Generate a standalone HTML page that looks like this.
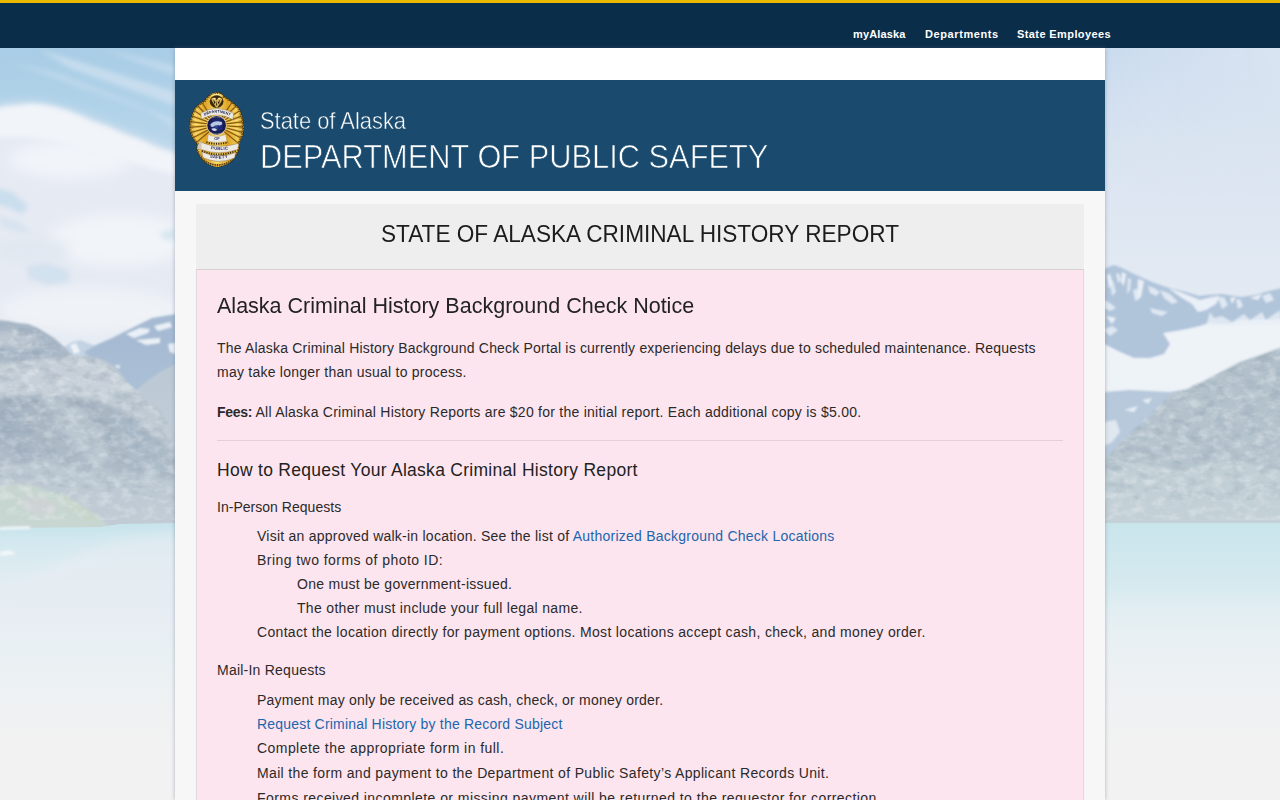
<!DOCTYPE html>
<html lang="en">
<head>
<meta charset="utf-8">
<title>State of Alaska Criminal History Report</title>
<style>
html,body{margin:0;padding:0;width:1280px;height:800px;overflow:hidden;}
body{width:1280px;height:800px;overflow:hidden;position:relative;background:#e9eef2;font-family:"Liberation Sans",sans-serif;color:#222;}
#bg{position:absolute;left:0;top:0;width:1280px;height:800px;}
#topbar{position:absolute;left:0;top:0;width:1280px;height:48px;background:#0a2d4a;border-top:3px solid #ebb800;box-sizing:border-box;}
#topbar a{position:absolute;top:23px;line-height:16px;font-size:11px;font-weight:bold;color:#fff;text-decoration:none;white-space:nowrap;}
#wrap{position:absolute;left:175px;top:48px;width:930px;height:752px;overflow:hidden;background:#f7f7f7;box-shadow:0 0 4px rgba(90,100,120,.45);}
#white{position:absolute;left:0;top:0;width:930px;height:32px;background:#fff;}
#hdr{position:absolute;left:0;top:32px;width:930px;height:111px;background:#1a4b6e;}
#hdr .t1{position:absolute;left:85px;top:25px;font-size:24px;line-height:32px;color:#fff;white-space:nowrap;letter-spacing:0;transform:scaleX(.912);transform-origin:0 0;-webkit-text-stroke:0.5px #1a4b6e;}
#hdr .t2{position:absolute;left:85px;top:57px;font-size:33px;line-height:40px;color:#fff;white-space:nowrap;letter-spacing:0;transform:scaleX(.9335);transform-origin:0 0;-webkit-text-stroke:0.7px #1a4b6e;}
#badge{position:absolute;left:11px;top:8px;width:64px;height:84px;}
#panel{position:absolute;left:21px;top:156px;width:886px;height:700px;border:1px solid transparent;}
#pbody{position:absolute;left:-1px;top:65px;width:886px;height:640px;background:#fde5ef;border-left:1px solid #e3d6dc;border-right:1px solid #e3d6dc;}
#phead{position:absolute;left:-1px;top:-1px;width:888px;height:65px;background:#eee;border-bottom:1px solid #d6d2d4;}
#phead div{position:absolute;left:0;width:888px;top:14px;text-align:center;font-size:24px;line-height:32px;color:#1c1c1c;letter-spacing:0;white-space:nowrap;transform:scaleX(.942);transform-origin:50% 0;}
.l{position:absolute;white-space:nowrap;font-size:14px;line-height:24px;color:#2a2a2a;letter-spacing:0.2px;}
.l b{letter-spacing:-.3px;}
.l a{color:#2066ad;text-decoration:none;}
.h2{font-size:22px;line-height:30px;letter-spacing:0;color:#222;transform:scaleX(.978);transform-origin:0 0;}
.h3{font-size:17.5px;line-height:26px;letter-spacing:0.25px;color:#222;}
#hr{position:absolute;left:20px;top:235px;width:846px;height:1px;background:#e3cfd8;}
</style>
</head>
<body>
<svg id="bg" viewBox="0 0 1280 800" width="1280" height="800">
<defs>
  <linearGradient id="skyL" x1="0" y1="48" x2="0" y2="330" gradientUnits="userSpaceOnUse">
    <stop offset="0" stop-color="#a9cde6"/><stop offset=".25" stop-color="#b2d3e9"/><stop offset=".6" stop-color="#cfe0ee"/><stop offset="1" stop-color="#eaeff5"/>
  </linearGradient>
  <linearGradient id="skyR" x1="0" y1="48" x2="0" y2="300" gradientUnits="userSpaceOnUse">
    <stop offset="0" stop-color="#cadcef"/><stop offset=".4" stop-color="#dae4f1"/><stop offset="1" stop-color="#e3eaf3"/>
  </linearGradient>
  <linearGradient id="skyRx" x1="1104" y1="0" x2="1280" y2="0" gradientUnits="userSpaceOnUse">
    <stop offset="0" stop-color="#e0e7f2" stop-opacity="0"/><stop offset="1" stop-color="#e0e7f2" stop-opacity=".7"/>
  </linearGradient>
  <linearGradient id="skyRy" x1="0" y1="48" x2="0" y2="200" gradientUnits="userSpaceOnUse">
    <stop offset="0" stop-color="#fff" stop-opacity="1"/><stop offset="1" stop-color="#fff" stop-opacity="0"/>
  </linearGradient>
  <mask id="mR"><rect x="1104" y="48" width="176" height="200" fill="url(#skyRy)"/></mask>
  <linearGradient id="water" x1="0" y1="522" x2="0" y2="742" gradientUnits="userSpaceOnUse"><stop offset="0.000" stop-color="#c6e3eb"/><stop offset="0.036" stop-color="#cbe5ed"/><stop offset="0.091" stop-color="#d3e8ef"/><stop offset="0.173" stop-color="#daebf0"/><stop offset="0.264" stop-color="#e1ecf1"/><stop offset="0.445" stop-color="#e6eff3"/><stop offset="0.718" stop-color="#ecf1f3"/><stop offset="1.000" stop-color="#f2f2f2"/></linearGradient>
  <linearGradient id="waterR" x1="0" y1="522" x2="0" y2="742" gradientUnits="userSpaceOnUse"><stop offset="0.000" stop-color="#c9e5ec"/><stop offset="0.127" stop-color="#cee7ed"/><stop offset="0.286" stop-color="#d6eaef"/><stop offset="0.400" stop-color="#e2eef2"/><stop offset="0.536" stop-color="#e9f0f3"/><stop offset="0.764" stop-color="#eef1f3"/><stop offset="1.000" stop-color="#f2f2f2"/></linearGradient>
  <linearGradient id="haze" x1="0" y1="340" x2="0" y2="526" gradientUnits="userSpaceOnUse">
    <stop offset="0" stop-color="#e6edf2" stop-opacity="0"/><stop offset="1" stop-color="#e6edf2" stop-opacity=".3"/>
  </linearGradient>
  <filter id="b1" x="-20%" y="-20%" width="140%" height="140%"><feGaussianBlur stdDeviation=".8"/></filter>
  <filter id="b2" x="-20%" y="-20%" width="140%" height="140%"><feGaussianBlur stdDeviation="2.5"/></filter>
  <filter id="b5" x="-30%" y="-30%" width="160%" height="160%"><feGaussianBlur stdDeviation="6"/></filter>
  <filter id="rock" x="0" y="0" width="100%" height="100%" color-interpolation-filters="sRGB">
    <feTurbulence type="fractalNoise" baseFrequency="0.09 0.13" numOctaves="3" seed="7" result="n"/>
    <feColorMatrix in="n" type="matrix" values="0 0 0 0 1  0 0 0 0 1  0 0 0 0 1  2.6 0 0 0 -1.15" result="hi"/>
    <feComposite in="hi" in2="SourceAlpha" operator="in"/>
  </filter>
  <filter id="rockd" x="0" y="0" width="100%" height="100%" color-interpolation-filters="sRGB">
    <feTurbulence type="fractalNoise" baseFrequency="0.07 0.11" numOctaves="3" seed="23" result="n"/>
    <feColorMatrix in="n" type="matrix" values="0 0 0 0 .38  0 0 0 0 .47  0 0 0 0 .56  0 2.4 0 0 -1.1" result="lo"/>
    <feComposite in="lo" in2="SourceAlpha" operator="in"/>
  </filter>
  <clipPath id="cl"><rect x="0" y="48" width="176" height="752"/></clipPath>
  <clipPath id="cr"><rect x="1104" y="48" width="176" height="752"/></clipPath>
</defs>
<!-- LEFT BAND -->
<g clip-path="url(#cl)">
  <rect x="0" y="48" width="176" height="500" fill="url(#skyL)"/>
  <g filter="url(#b2)" fill="#d3e3f1">
    <path d="M40 50 L176 92 L176 106 L70 68Z" opacity=".7"/>
    <path d="M10 62 L150 112 L176 130 L176 120 L60 74Z" opacity=".45"/>
    <path d="M100 48 L176 66 L176 76Z" opacity=".5"/>
  </g>
  <g filter="url(#b5)">
    <path d="M-20 112 C5 103 30 102 55 108 C80 114 100 124 126 134 C146 142 160 148 190 160 L190 345 L-20 345Z" fill="#e6eaf3"/>
    <ellipse cx="70" cy="160" rx="60" ry="18" fill="#f1f4f9"/>
    <ellipse cx="120" cy="240" rx="70" ry="26" fill="#f1f4f8"/>
    <ellipse cx="90" cy="310" rx="90" ry="22" fill="#eff3f7"/>
    <ellipse cx="30" cy="250" rx="40" ry="12" fill="#e1e8f1"/>
  </g>
  <path d="M-10 112 C0 106 14 107 24 105 C36 102 48 106 58 108 C70 111 78 115 90 121 C100 125 108 126 118 132 C128 137 138 138 148 144 C158 149 166 150 180 156 L180 176 C150 168 120 160 90 150 C60 142 30 134 -10 138Z" fill="#f1f4f9" filter="url(#b2)"/>
  <g filter="url(#b2)" fill="#c0d9eb">
    <path d="M-5 188 L12 192 L28 206 L22 214 L8 207 L-5 204Z" opacity=".75"/>
    <path d="M0 216 L18 222 L32 232 L18 232 L0 226Z" opacity=".4"/>
    <path d="M26 267 L46 263 L68 270 L70 282 L48 285 L30 279Z" opacity=".5"/>
    <path d="M160 232 L176 228 L176 240 L164 240Z" opacity=".5"/>
  </g>
  <!-- far peaks in valley -->
  <path d="M62 348 L72 342 L80 340 L88 343 L96 346 L104 356 L64 362Z" fill="#c3d3e4" filter="url(#b1)"/>
  <path d="M70 345 L76 343 L80 352 L74 354Z" fill="#eef3f8" filter="url(#b1)"/>
  <!-- right blue mountain -->
  <g filter="url(#b1)">
    <path d="M84 352 L98 344 L112 338 L128 330 L140 324 L152 318 L164 316 L176 314 L176 470 L130 420 L104 372Z" fill="#a6bbd3"/>
    <path d="M126 334 L140 328 L150 329 L148 333 L134 338Z M154 326 L170 322 L172 327 L158 331Z M136 340 L160 338 L160 343 L146 345Z M168 344 L176 343 L176 354 L170 352Z M114 366 L120 365 L119 369Z" fill="#eaf0f6"/>
    <path d="M176 364 L160 372 L146 382 L136 390 L150 412 L176 440Z" fill="#bac7d3"/>
  </g>
  <!-- left rocky mountain: back ridge -->
  <g filter="url(#b1)">
    <path d="M-2 320 L8 321 L18 323 L28 324 L38 328 L46 333 L54 338 L60 343 L66 349 L72 355 L78 362 L60 372 L-2 372Z" fill="#a7b6c5"/>
    <path id="lfm" d="M-2 366 L14 362 L34 360 L52 358 L68 356 L84 356 L98 358 L108 362 L118 370 L126 380 L134 390 L146 398 L158 407 L168 420 L176 436 L176 530 L-2 530Z" fill="#bac5cf"/>
  </g>
  <clipPath id="clm"><path d="M-2 320 L28 324 L46 333 L60 343 L72 355 L84 356 L98 358 L108 362 L118 370 L126 380 L134 390 L146 398 L158 407 L168 420 L176 436 L176 530 L-2 530Z"/></clipPath>
  <g clip-path="url(#clm)"><g filter="url(#b2)">
    <path d="M-10 334 L16 330 L34 336 L44 346 L30 350 L8 346 L-10 350Z" fill="#c3ccd5" opacity=".75"/>
    <path d="M-10 366 L30 361 L70 358 L100 360 L124 380 L136 394 L100 400 L60 392 L20 394 L-10 398Z" fill="#c7d0d8" opacity=".85"/>
    <path d="M-10 398 L20 394 L44 400 L70 396 L96 402 L120 410 L140 424 L160 440 L186 460 L186 540 L-10 540Z" fill="#a0afbd"/>
    <path d="M40 404 L60 400 L84 410 L100 430 L110 456 L96 470 L80 450 L60 430Z" fill="#bac6cf" opacity=".75"/>
    <path d="M-10 404 L16 410 L30 430 L44 456 L30 470 L10 450 L-10 440Z" fill="#98aaba" opacity=".7"/>
    <path d="M112 420 L130 416 L150 440 L166 470 L150 480 L128 456Z" fill="#9fb0bf" opacity=".6"/>
    <path d="M-10 468 L40 460 L80 468 L120 474 L186 478 L186 540 L-10 540Z" fill="#b3c0ca" opacity=".9"/>
  </g>
  <g filter="url(#b1)">
    <path d="M-2 487 L14 484 L34 486 L52 492 L70 500 L86 508 L100 518 L110 527 L-2 530Z" fill="#bccdc4"/>
    <path d="M20 498 L40 496 L60 506 L50 516 L28 512Z" fill="#c9c7cc" opacity=".7"/>
    <path d="M60 492 L84 506 L100 520 L84 520 L66 508Z" fill="#b9cbb8" opacity=".7"/>
  </g></g>
  <!-- texture -->
  <path d="M-2 324 L38 330 L66 351 L98 358 L126 380 L158 407 L176 436 L176 520 L-2 520Z" fill="#fff" filter="url(#rock)" opacity=".3"/>
  <path d="M-2 324 L38 330 L66 351 L98 358 L126 380 L158 407 L176 436 L176 500 L-2 480Z" fill="#fff" filter="url(#rockd)" opacity=".25"/>
  <rect x="0" y="340" width="176" height="190" fill="url(#haze)"/>
</g>
<!-- RIGHT BAND -->
<g clip-path="url(#cr)">
  <rect x="1104" y="48" width="176" height="500" fill="url(#skyR)"/>
  <rect x="1104" y="48" width="176" height="200" fill="url(#skyRx)" mask="url(#mR)"/>
  <g filter="url(#b1)">
    <path d="M1100 271 L1106 268 L1114 265 L1122 268 L1132 273 L1145 279 L1152 282 L1166 287 L1186 292 L1199 296 L1207 295 L1222 294 L1241 297 L1255 295 L1269 291 L1282 288 L1282 530 L1100 530Z" fill="#b0c4da"/>
    <!-- ridge snow streaks -->
    <path d="M1107 275 L1110 274 L1113 284 L1109 288Z M1122 272 L1126 274 L1124 286 L1121 282Z M1138 279 L1144 281 L1141 297 L1137 300Z M1168 288 L1180 292 L1190 296 L1200 300 L1212 297 L1220 296 L1216 304 L1206 310 L1198 312 L1192 304 L1182 298Z M1230 298 L1236 297 L1232 304Z M1250 298 L1262 294 L1258 300Z M1106 316 L1116 318 L1112 324Z" fill="#eaf0f7"/>
    <path d="M1110 282 L1113 281 L1116 292 L1112 296Z M1116 274 L1119 273 L1121 280 L1118 283Z M1128 278 L1131 279 L1130 290 L1127 294Z M1133 290 L1137 289 L1140 298 L1135 301Z M1148 286 L1154 288 L1160 292 L1156 296 L1150 293Z M1160 290 L1170 294 L1178 302 L1172 304 L1164 298Z M1104 300 L1110 303 L1116 308 L1110 311 L1104 308Z M1150 308 L1158 310 L1168 312 L1162 316 L1152 313Z M1218 298 L1224 297 L1228 305 L1222 309Z M1236 300 L1240 299 L1243 306 L1238 309Z M1262 296 L1270 293 L1274 300 L1266 303Z M1104 330 L1112 326 L1118 330 L1110 336Z" fill="#e4ecf5" opacity=".9"/>
    <!-- snowfield -->
    <path d="M1104 344 L1112 348 L1120 352 L1134 358 L1150 358 L1164 354 L1170 344 L1163 333 L1176 331 L1187 329 L1200 326 L1209 323 L1228 324 L1241 320 L1260 320 L1282 319 L1282 350 L1260 356 L1240 362 L1219 373 L1204 381 L1187 389 L1170 392 L1150 391 L1130 390 L1104 392Z" fill="#eef3f8"/>
    <path d="M1210 312 L1214 318 L1222 316 L1232 322 L1244 314 L1250 320 L1262 312 L1266 320 L1280 310 L1282 324 L1206 326Z" fill="#e9eff6" opacity=".8"/>
    <!-- far blue lower -->
    <path d="M1104 392 L1170 392 L1150 416 L1120 442 L1104 460Z" fill="#b4c6da"/>
    <path d="M1104 422 L1116 420 L1120 432 L1112 442 L1104 446Z" fill="#dfe7ef"/>
    <path d="M1124 410 L1138 406 L1134 412Z M1142 400 L1152 398 L1148 404Z" fill="#e6edf4"/>
    <!-- front grey mountain -->
    <path d="M1282 347 L1260 355 L1240 362 L1219 373 L1204 381 L1187 389 L1170 394 L1158 408 L1142 424 L1120 442 L1104 460 L1104 530 L1282 530Z" fill="#b0bfc9"/>
    <path d="M1104 474 L1140 462 L1180 470 L1230 460 L1282 470 L1282 530 L1104 530Z" fill="#bccad1"/>
  </g>
  <path d="M1282 347 L1219 373 L1170 394 L1120 442 L1104 460 L1104 520 L1282 520Z" fill="#fff" filter="url(#rock)" opacity=".3"/>
  <path d="M1282 347 L1219 373 L1170 394 L1120 442 L1104 460 L1104 500 L1282 500Z" fill="#fff" filter="url(#rockd)" opacity=".22"/>
  <rect x="1104" y="360" width="176" height="170" fill="url(#haze)" opacity=".6"/>
</g>
<!-- WATER -->
<path d="M0 528 L100 527 L120 524 L176 523 L176 800 L0 800Z" fill="url(#water)"/>
<rect x="1104" y="523" width="176" height="277" fill="url(#waterR)"/>
<g clip-path="url(#cl)"><path d="M80 552 L124 538 L200 530 L200 640 L-20 640 L-20 604Z" fill="#e9edf3" opacity=".55" filter="url(#b5)"/></g>
<path d="M0 527 L30 526 L30 529 L0 530Z" fill="#eef4f7" filter="url(#b1)"/>
<path d="M0 552 L10 550 L16 554 L0 556Z" fill="#f2f6f8" filter="url(#b1)"/>
</svg>
<div id="topbar">
  <a style="left:853px;letter-spacing:.14px">myAlaska</a>
  <a style="left:925px;letter-spacing:.59px">Departments</a>
  <a style="left:1017px;letter-spacing:.4px">State Employees</a>
</div>
<div id="wrap">
  <div id="white"></div>
  <div id="hdr">
    <svg id="badge" viewBox="186 88 64 84" width="64" height="84">
<defs>
  <linearGradient id="gd" x1="189" y1="0" x2="244" y2="0" gradientUnits="userSpaceOnUse">
    <stop offset="0" stop-color="#a8721c"/><stop offset=".12" stop-color="#f2cc52"/><stop offset=".3" stop-color="#e0a526"/><stop offset=".5" stop-color="#f6da6c"/><stop offset=".7" stop-color="#e0a526"/><stop offset=".88" stop-color="#f2cc52"/><stop offset="1" stop-color="#a8721c"/>
  </linearGradient>
  <radialGradient id="seal" cx="216.6" cy="125.2" r="9.6" gradientUnits="userSpaceOnUse">
    <stop offset="0" stop-color="#3f5aa0"/><stop offset=".5" stop-color="#1f2a70"/><stop offset="1" stop-color="#12133f"/>
  </radialGradient>
  <clipPath id="bc"><path id="bodyp" d="M216.8 92.5 C219.5 92.5 222.6 93.6 223.8 96.4 C227 97.8 233 102.5 238.8 108.4 C241.4 113 243 120 243.6 127 C243.4 132.5 242.2 137.5 239.6 142 L238.9 149 C237.2 154 235.2 157 233.4 158.8 C231.3 161.2 229.6 162.6 228 163.6 C224.2 165.6 221 166.4 217.6 166.9 C214 166.4 210.5 165.2 207 163.2 C205 161.7 203.1 160.1 201.6 158.3 C199.6 155.6 198 153 197 150 L197.3 143.8 C194.6 140.4 193 138.2 192 136 C190.3 132.3 189.6 129.2 189.6 127 C189.9 122.5 190.5 120 191.4 118 C192.4 114 193.4 111 195 108.4 C198 105 200.8 103 204 101.6 C205.8 98.8 207.8 96.5 209.8 95 C211.8 93.3 214.4 92.5 216.8 92.5Z"/></clipPath>
  <path id="pDept" d="M202 117.4 Q217 107.6 232.6 117.6" fill="none"/>
  <path id="pPub" d="M202.4 146.2 Q218.5 153 237 147.8" fill="none"/>
  <path id="pSaf" d="M203.6 154.8 Q218 162 234.2 155.8" fill="none"/>
  <filter id="bb" x="-10%" y="-10%" width="120%" height="120%"><feGaussianBlur stdDeviation=".35"/></filter>
</defs>
<g filter="url(#bb)">
  <use href="#bodyp" fill="url(#gd)" stroke="#3f2a0a" stroke-width="1.1"/>
  <g clip-path="url(#bc)">
    <!-- rays -->
    <g stroke="#7e520f" stroke-width="1.25" opacity=".9">
      <path d="M216.6 125.2 L186 121 M216.6 125.2 L186 127.5 M216.6 125.2 L186 134 M216.6 125.2 L187 141 M216.6 125.2 L190 148 M216.6 125.2 L188 114.5 M216.6 125.2 L190 108 M216.6 125.2 L194 102 M216.6 125.2 L199 98"/>
      <path d="M216.6 125.2 L248 121 M216.6 125.2 L248 127.5 M216.6 125.2 L248 134 M216.6 125.2 L247 141 M216.6 125.2 L244 148 M216.6 125.2 L246 114.5 M216.6 125.2 L244 108 M216.6 125.2 L240 102 M216.6 125.2 L235 98"/>
    </g>
    <g stroke="#fbe78c" stroke-width=".8" opacity=".85">
      <path d="M216.6 125.2 L186 124.2 M216.6 125.2 L186 130.7 M216.6 125.2 L186.5 137.5 M216.6 125.2 L188 118 M216.6 125.2 L189 111 M216.6 125.2 L192 105"/>
      <path d="M216.6 125.2 L248 124.2 M216.6 125.2 L248 130.7 M216.6 125.2 L247.5 137.5 M216.6 125.2 L246 118 M216.6 125.2 L245 111 M216.6 125.2 L242 105"/>
    </g>
    <!-- outer rim scallops -->
    <use href="#bodyp" fill="none" stroke="#5e3d0c" stroke-width="3" stroke-dasharray="1.3 1.4" opacity=".85"/>
    <use href="#bodyp" fill="none" stroke="#f3d874" stroke-width="1" stroke-dasharray="1.5 1.3" stroke-dashoffset="1.4" opacity=".9"/>
    <!-- bottom rim dark checks -->
    <path d="M200 157 Q217.8 172 235.4 157 L233 165 Q217.8 170 203 165Z" fill="#c08a24"/>
    <path d="M203.4 160.6 Q217.8 169.6 232 160.8" fill="none" stroke="#4a3210" stroke-width="2.2" stroke-dasharray="1.1 1.3"/>
    <path d="M207 164 Q217.8 168.4 228 164.2" fill="none" stroke="#e7c25a" stroke-width="1.4" stroke-dasharray="1.2 1"/>
  </g>
  <!-- top dome + eagle -->
  <path d="M210.4 96 C212 93.2 221.6 93.2 223 96 C221 94.9 212.6 94.9 210.4 96Z" fill="#fbeeb0"/>
  <ellipse cx="216.6" cy="101.6" rx="6.9" ry="6.3" fill="#3b2a0e"/>
  <path d="M211.2 99 C213 96.6 215.4 97.6 216.4 100.4 C217.6 97.4 220.6 96.6 222.2 99.2 C221 103 219 104.6 217.6 107.4 L216 107.4 C214.8 104.6 212.4 102.8 211.2 99Z" fill="#d9b55a"/>
  <path d="M213.4 99.6 L215.6 102.6 L214.2 104Z M219.8 99.6 L217.8 102.8 L219.2 104.2Z M216.7 100.8 L217.3 105.6 L216.1 105.6Z" fill="#2a1c08"/>
  <ellipse cx="214.6" cy="98.6" rx="1.1" ry=".8" fill="#fff3c4"/><ellipse cx="219.2" cy="98.4" rx="1" ry=".7" fill="#fff3c4"/>
  <!-- DEPARTMENT banner -->
  <path d="M200.6 113.2 Q217 103.6 233.8 113.6 L232.8 119.6 Q217 110.8 201.6 119.2Z" fill="#ece8e0" stroke="#7c6a4a" stroke-width=".4"/>
  <text font-family="Liberation Sans, sans-serif" font-weight="bold" font-size="3.7" fill="#20224e" letter-spacing=".12"><textPath href="#pDept" startOffset="50%" text-anchor="middle">DEPARTMENT</textPath></text>
  <!-- seal -->
  <circle cx="216.6" cy="125.4" r="10" fill="#e6dcb4"/>
  <circle cx="216.6" cy="125.4" r="9.3" fill="url(#seal)"/>
  <path d="M210.4 124.6 C212.6 121.4 217.6 120.6 221.6 122 C223 123.4 222 125.4 219.6 125.4 C217 124.4 214.6 125.4 213 127 C211.6 127.4 210.2 126.4 210.4 124.6Z" fill="#c9d8ee" opacity=".9"/>
  <path d="M211.4 128.8 C213.6 127.6 216 128.4 217.2 129.8 C215.4 131.6 212.8 131.4 211.4 128.8Z" fill="#e8eef8" opacity=".9"/>
  <path d="M217.6 126.6 L221.8 126 L222.6 129.4 L218.8 130.6Z" fill="#1b2a7a"/>
  <path d="M209.8 131.8 Q216.6 136.4 223.6 131.6" fill="none" stroke="#d9d2c2" stroke-width="1" stroke-dasharray=".8 .6"/>
  <path d="M210.6 118.6 Q216.6 115.4 222.8 118.8" fill="none" stroke="#c9c2d6" stroke-width=".7" stroke-dasharray=".7 .6"/>
  <!-- OF pedestal -->
  <path d="M208.2 134.6 Q216.8 138.6 225.6 134.4 L226.8 141.2 Q217 143.6 207.4 141.2Z" fill="#efece6" stroke="#8c7a56" stroke-width=".3"/>
  <text x="217" y="140.3" text-anchor="middle" font-family="Liberation Sans, sans-serif" font-weight="bold" font-size="4" fill="#2b2f6a">OF</text>
  <!-- checker under OF -->
  <path d="M206.4 142.2 Q217 145.4 228 142.2" fill="none" stroke="#3a280c" stroke-width="1.9" stroke-dasharray="1.2 1.2"/>
  <!-- PUBLIC banner -->
  <path d="M199.6 141.6 L201.6 142.4 Q218.4 149.6 237.4 143.6 L238.8 144.2 L237.6 149.6 Q218.4 156 201.4 149.6 L197.2 148.4Z" fill="#edeae4" stroke="#6e5c3c" stroke-width=".4"/>
  <path d="M197.2 148.4 L199.6 141.6 L201.6 142.4 L201.4 149.6Z" fill="#cfc8b8"/>
  <text font-family="Liberation Sans, sans-serif" font-weight="bold" font-size="4.3" fill="#2b2f6a" letter-spacing=".25"><textPath href="#pPub" startOffset="50%" text-anchor="middle">PUBLIC</textPath></text>
  <!-- checker between -->
  <path d="M201.8 151 Q218 157.8 236 151" fill="none" stroke="#3a280c" stroke-width="1.9" stroke-dasharray="1.2 1.2"/>
  <path d="M201.8 152.2 Q218 159 236 152.2" fill="none" stroke="#dcae3c" stroke-width=".9" stroke-dasharray="1.2 1.2" stroke-dashoffset="1.2"/>
  <!-- SAFETY banner -->
  <path d="M201.8 151.8 Q218 159.4 235.8 152.6 L234.6 158 Q218 165 203 157.6Z" fill="#edeae4" stroke="#6e5c3c" stroke-width=".4"/>
  <text font-family="Liberation Sans, sans-serif" font-weight="bold" font-size="4.3" fill="#2b2f6a" letter-spacing=".25"><textPath href="#pSaf" startOffset="50%" text-anchor="middle">SAFETY</textPath></text>
</g>
</svg>
    <div class="t1">State of Alaska</div>
    <div class="t2">DEPARTMENT OF PUBLIC SAFETY</div>
  </div>
  <div id="panel">
    <div id="pbody"></div>
    <div id="phead"><div>STATE OF ALASKA CRIMINAL HISTORY REPORT</div></div>
    <div class="l h2" style="left:20px;top:86px">Alaska Criminal History Background Check Notice</div>
    <div class="l" style="left:20px;top:131px;letter-spacing:0.190px">The Alaska Criminal History Background Check Portal is currently experiencing delays due to scheduled maintenance. Requests</div>
    <div class="l" style="left:20px;top:155px;letter-spacing:0.241px">may take longer than usual to process.</div>
    <div class="l" style="left:20px;top:195px;letter-spacing:0.252px"><b>Fees:</b> All Alaska Criminal History Reports are $20 for the initial report. Each additional copy is $5.00.</div>
    <div id="hr"></div>
    <div class="l h3" style="left:20px;top:252px;letter-spacing:0.282px">How to Request Your Alaska Criminal History Report</div>
    <div class="l" style="left:20px;top:290px;letter-spacing:0.024px">In-Person Requests</div>
    <div class="l" style="left:60px;top:319px;letter-spacing:0.240px">Visit an approved walk-in location. See the list of <a>Authorized Background Check Locations</a></div>
    <div class="l" style="left:60px;top:343px;letter-spacing:0.449px">Bring two forms of photo ID:</div>
    <div class="l" style="left:100px;top:367px;letter-spacing:0.273px">One must be government-issued.</div>
    <div class="l" style="left:100px;top:391px;letter-spacing:0.322px">The other must include your full legal name.</div>
    <div class="l" style="left:60px;top:415px;letter-spacing:0.322px">Contact the location directly for payment options. Most locations accept cash, check, and money order.</div>
    <div class="l" style="left:20px;top:453px;letter-spacing:0.233px">Mail-In Requests</div>
    <div class="l" style="left:60px;top:483px;letter-spacing:0.209px">Payment may only be received as cash, check, or money order.</div>
    <div class="l" style="left:60px;top:507px;letter-spacing:0.196px"><a>Request Criminal History by the Record Subject</a></div>
    <div class="l" style="left:60px;top:531px;letter-spacing:0.445px">Complete the appropriate form in full.</div>
    <div class="l" style="left:60px;top:556px;letter-spacing:0.351px">Mail the form and payment to the Department of Public Safety’s Applicant Records Unit.</div>
    <div class="l" style="left:60px;top:581px;letter-spacing:0.431px">Forms received incomplete or missing payment will be returned to the requestor for correction.</div>
  </div>
</div>
</body>
</html>
